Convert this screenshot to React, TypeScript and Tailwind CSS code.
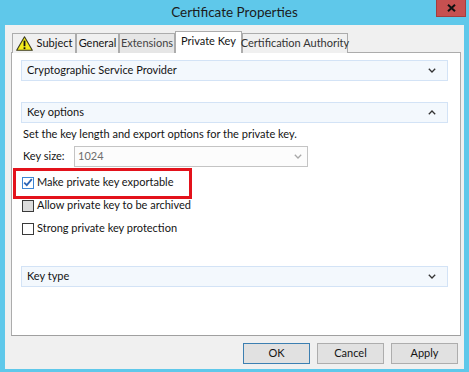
import React from 'react';

const font = { fontFamily: 'Lato, "Noto Sans", sans-serif' };

function ChevronDown({ color = '#333' }: { color?: string }) {
  return (
    <svg width="8" height="5" viewBox="0 0 8 5" className="block">
      <path d="M0.8 0.8 L4 4 L7.2 0.8" fill="none" stroke={color} strokeWidth="1.3" />
    </svg>
  );
}

function ChevronUp() {
  return (
    <svg width="8" height="5" viewBox="0 0 8 5" className="block">
      <path d="M0.8 4.2 L4 1 L7.2 4.2" fill="none" stroke="#333" strokeWidth="1.3" />
    </svg>
  );
}

function Warning() {
  return (
    <svg width="17" height="15" viewBox="0 0 17 15" className="block">
      <path d="M8.5 0.8 L16.3 14.3 L0.7 14.3 Z" fill="#f4ec1c" stroke="#3a3a20" strokeWidth="1.1" strokeLinejoin="round" />
      <rect x="7.6" y="4.6" width="1.8" height="5.6" fill="#111" />
      <rect x="7.6" y="11.3" width="1.8" height="1.8" fill="#111" />
    </svg>
  );
}

function Bar({ label, up }: { label: string; up?: boolean }) {
  return (
    <div className="w-[427px] h-[21px] bg-[#f3f8fd] border border-[#d3e3f6] flex items-center justify-between pl-[5px] pr-[11px] text-[#141414]">
      <span>{label}</span>
      {up ? <ChevronUp /> : <ChevronDown />}
    </div>
  );
}

function Check({ checked, grey }: { checked?: boolean; grey?: boolean }) {
  if (checked) {
    return (
      <div className="w-[12px] h-[12px] border border-[#3d86d4] bg-white flex items-center justify-center">
        <svg width="10" height="9" viewBox="0 0 10 9" className="block">
          <path d="M1.2 4.6 L3.8 7.2 L8.8 1.2" fill="none" stroke="#2b65b6" strokeWidth="1.8" />
        </svg>
      </div>
    );
  }
  return <div className={`w-[12px] h-[12px] border border-[#3a3a3a] ${grey ? 'bg-[#dcdcdc]' : 'bg-white'}`} />;
}

export default function App() {
  const tabs = [
    { label: 'Subject', w: 'w-[64px]', icon: true },
    { label: 'General', w: 'w-[43px]' },
    { label: 'Extensions', w: 'w-[56px]', dim: true },
  ];
  return (
    <div className="w-[469px] h-[372px] bg-[#5fc8ea] flex flex-col text-[11px]" style={font}>
      {/* Title bar */}
      <div className="relative h-[25px] shrink-0 flex items-center justify-center">
        <span className="text-[13.5px] text-[#1b1b1b] leading-none">Certificate Properties</span>
        <div className="absolute top-0 right-[3px] w-[30px] h-[17px] bg-[#c75050] border border-t-0 border-[#a43d3d] flex items-center justify-center">
          <svg width="9" height="8" viewBox="0 0 9 8" className="block">
            <path d="M1 0.8 L8 7.2 M8 0.8 L1 7.2" stroke="#111" strokeWidth="2" />
          </svg>
        </div>
      </div>

      {/* Dialog body */}
      <div className="flex-1 ml-[5px] mr-[5px] mb-[3px] bg-[#f0f0f0] flex flex-col pl-[6px] pr-[3px] pt-[6px] text-[#141414]">
        {/* Tabs */}
        <div className="h-[22px] flex items-end pl-[1px] relative z-10 -mb-px whitespace-nowrap">
          {tabs.map((t) => (
            <div
              key={t.label}
              className={`${t.w} h-[20px] border border-b-0 border-[#acacac] flex items-center justify-center gap-[4px] ${t.dim ? 'bg-[#e6e6e6] text-[#444]' : 'bg-[#f0f0f0]'}`}
            >
              {t.icon && <Warning />}
              <span>{t.label}</span>
            </div>
          ))}
          <div className="w-[67px] h-[22px] bg-white border border-b-0 border-[#acacac] flex items-center justify-center pb-[2px]">
            Private Key
          </div>
          <div className="w-[106px] h-[20px] bg-[#f0f0f0] border border-b-0 border-[#acacac] flex items-center justify-center text-[#333]">
            Certification Authority
          </div>
        </div>

        {/* Panel */}
        <div className="relative h-[284px] bg-white border border-[#acacac] border-b-[#a0a0a0] pl-[9px] pt-[7px]">
          <Bar label="Cryptographic Service Provider" />
          <div className="mt-[21px]">
            <Bar label="Key options" up />
          </div>
          <div className="pl-[2px] mt-[4px] h-[14px] leading-[14px]">
            Set the key length and export options for the private key.
          </div>
          <div className="flex items-center mt-[5px] pl-[2px]">
            <span className="w-[51px]">Key size:</span>
            <div className="w-[234px] h-[21px] border border-[#c4c4c4] bg-[#fcfcfc] flex items-center justify-between pl-[3px] pr-[5px] text-[#6d6d6d]">
              <span>1024</span>
              <ChevronDown color="#a8a8a8" />
            </div>
          </div>
          <div className="flex flex-col gap-[10px] mt-[9px] pl-[1px]">
            <div className="flex items-center gap-[3px] h-[13px]">
              <Check checked />
              <span>Make private key exportable</span>
            </div>
            <div className="flex items-center gap-[3px] h-[13px]">
              <Check grey />
              <span>Allow private key to be archived</span>
            </div>
            <div className="flex items-center gap-[3px] h-[13px]">
              <Check />
              <span>Strong private key protection</span>
            </div>
          </div>
          <div className="mt-[31px]">
            <Bar label="Key type" />
          </div>

          {/* Annotation highlight */}
          <div className="absolute left-[1px] top-[115px] w-[179px] h-[31px] border-[3px] border-[#e3121b]" />
        </div>

        {/* Buttons */}
        <div className="flex justify-end gap-[7px] mt-[7px] pr-[3px]">
          <button className="w-[67px] h-[21px] bg-[#e1e1e1] border border-[#3c7fb1]">OK</button>
          <button className="w-[67px] h-[21px] bg-[#e1e1e1] border border-[#adadad]">Cancel</button>
          <button className="w-[67px] h-[21px] bg-[#e1e1e1] border border-[#adadad]">Apply</button>
        </div>
      </div>
    </div>
  );
}
